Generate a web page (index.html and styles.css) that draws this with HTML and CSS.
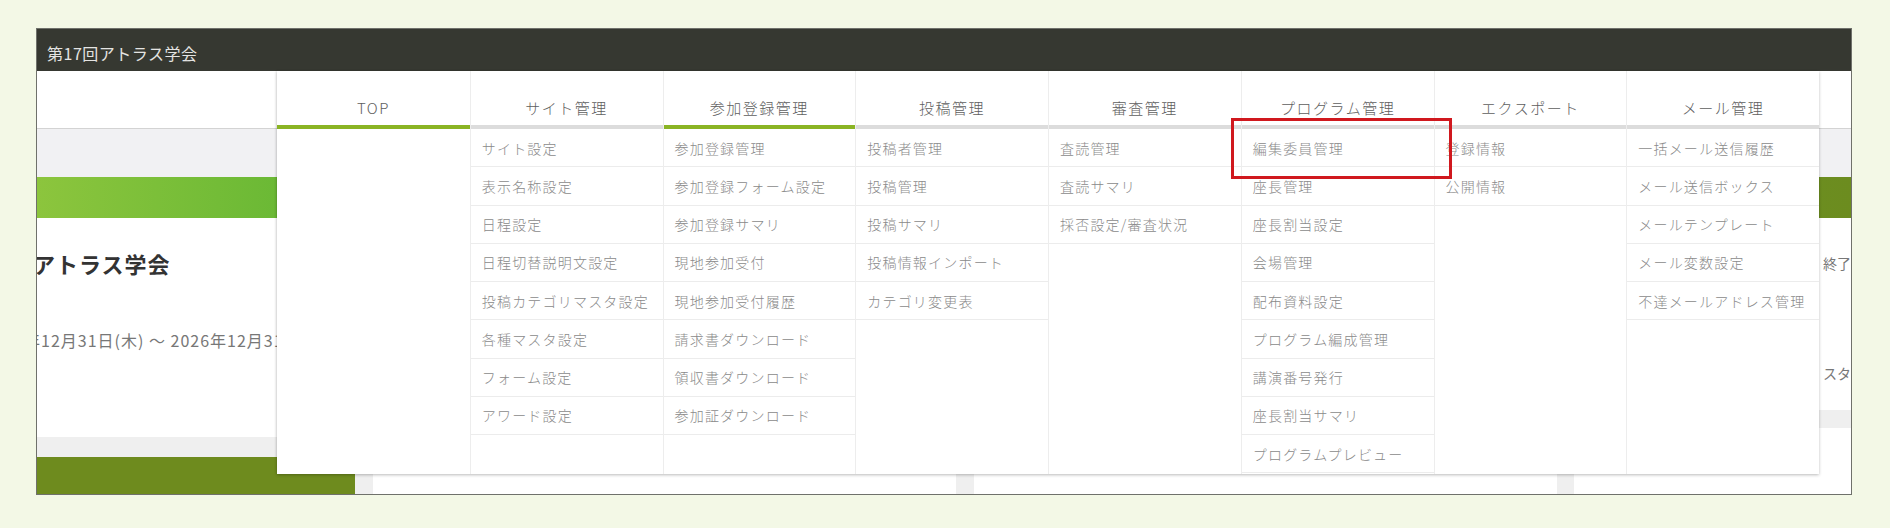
FILE: index.html
```html
<!DOCTYPE html>
<html lang="ja">
<head>
<meta charset="utf-8">
<title>第17回アトラス学会</title>
<link rel="stylesheet" href="styles.css">
</head>
<body>
<div class="page">
  <div class="frame">
    <div class="topbar">第17回アトラス学会</div>
    <div class="strip"></div>
    <div class="band"></div>
    <div class="greenbar"></div>
    <div class="body">
      <div class="main">
        <div class="info-card">
          <div class="conf-name">アトラス学会</div>
          <div class="conf-date">年12月31日(木) 〜 2026年12月31日(木)</div>
        </div>
        <div class="bottom-row">
          <div class="olive-btn"></div>
          <div class="card card-a"></div>
          <div class="card card-b"></div>
        </div>
      </div>
      <div class="side">
        <div class="side-card">
          <p class="side-line first">終了しました</p>
          <p class="side-line">スタッフ</p>
        </div>
        <div class="side-card2"></div>
      </div>
    </div>

    <nav class="megamenu">
      <div class="menu-col">
        <div class="menu-head active">TOP</div>
      </div>
      <div class="menu-col">
        <div class="menu-head">サイト管理</div>
        <div class="menu-item">サイト設定</div>
        <div class="menu-item">表示名称設定</div>
        <div class="menu-item">日程設定</div>
        <div class="menu-item">日程切替説明文設定</div>
        <div class="menu-item">投稿カテゴリマスタ設定</div>
        <div class="menu-item">各種マスタ設定</div>
        <div class="menu-item">フォーム設定</div>
        <div class="menu-item">アワード設定</div>
      </div>
      <div class="menu-col">
        <div class="menu-head active">参加登録管理</div>
        <div class="menu-item">参加登録管理</div>
        <div class="menu-item">参加登録フォーム設定</div>
        <div class="menu-item">参加登録サマリ</div>
        <div class="menu-item">現地参加受付</div>
        <div class="menu-item">現地参加受付履歴</div>
        <div class="menu-item">請求書ダウンロード</div>
        <div class="menu-item">領収書ダウンロード</div>
        <div class="menu-item">参加証ダウンロード</div>
      </div>
      <div class="menu-col">
        <div class="menu-head">投稿管理</div>
        <div class="menu-item">投稿者管理</div>
        <div class="menu-item">投稿管理</div>
        <div class="menu-item">投稿サマリ</div>
        <div class="menu-item">投稿情報インポート</div>
        <div class="menu-item">カテゴリ変更表</div>
      </div>
      <div class="menu-col">
        <div class="menu-head">審査管理</div>
        <div class="menu-item">査読管理</div>
        <div class="menu-item">査読サマリ</div>
        <div class="menu-item">採否設定/審査状況</div>
      </div>
      <div class="menu-col">
        <div class="menu-head">プログラム管理</div>
        <div class="menu-item">編集委員管理</div>
        <div class="menu-item">座長管理</div>
        <div class="menu-item">座長割当設定</div>
        <div class="menu-item">会場管理</div>
        <div class="menu-item">配布資料設定</div>
        <div class="menu-item">プログラム編成管理</div>
        <div class="menu-item">講演番号発行</div>
        <div class="menu-item">座長割当サマリ</div>
        <div class="menu-item">プログラムプレビュー</div>
      </div>
      <div class="menu-col">
        <div class="menu-head">エクスポート</div>
        <div class="menu-item">登録情報</div>
        <div class="menu-item">公開情報</div>
      </div>
      <div class="menu-col">
        <div class="menu-head">メール管理</div>
        <div class="menu-item">一括メール送信履歴</div>
        <div class="menu-item">メール送信ボックス</div>
        <div class="menu-item">メールテンプレート</div>
        <div class="menu-item">メール変数設定</div>
        <div class="menu-item">不達メールアドレス管理</div>
      </div>
      <div class="highlight"></div>
    </nav>
  </div>
</div>
</body>
</html>
```

FILE: styles.css
```css
* { box-sizing: border-box; }

html, body {
  margin: 0;
  padding: 0;
  background: #f3f8e6;
  font-family: "Noto Sans CJK JP", "Noto Sans", sans-serif;
}

.page {
  padding: 28px 0 0 36px;
  height: 528px;
}

.frame {
  position: relative;
  width: 1816px;
  height: 467px;
  border: 1px solid #6f716b;
  background: #efefef;
  overflow: hidden;
  display: flex;
  flex-direction: column;
}

.topbar {
  height: 42px;
  flex: none;
  background: #363831;
  color: #e4e4e2;
  font-size: 16px;
  letter-spacing: 0.5px;
  padding: 5px 0 0 10px;
  display: flex;
  align-items: center;
}

.strip {
  height: 58px;
  flex: none;
  background: #fff;
  border-bottom: 1px solid #d3d3d3;
}

.band {
  height: 48px;
  flex: none;
  background: #f1f1f3;
}

.greenbar {
  height: 41px;
  flex: none;
  background: linear-gradient(90deg, #8cc53d 0, #6bb935 240px, #6aa42b 1100px, #6c8c1f 100%);
}

.body {
  flex: 1;
  display: flex;
  gap: 17px;
  background: #efefef;
}

.main {
  flex: 1;
  display: flex;
  flex-direction: column;
  gap: 20px;
}

.info-card {
  height: 219px;
  background: #fff;
  padding-top: 30px;
}

.conf-name {
  margin-left: -4px;
  font-size: 22px;
  font-weight: bold;
  line-height: 30px;
  color: #333;
  letter-spacing: 1px;
}

.conf-date {
  margin: 52px 0 0 -13px;
  font-size: 16px;
  letter-spacing: 1px;
  line-height: 20px;
  color: #777;
  white-space: nowrap;
}

.bottom-row {
  flex: 1;
  display: flex;
  gap: 18px;
}

.olive-btn {
  width: 318px;
  background: #6e8b1e;
}

.card {
  background: #fff;
}

.card-a { width: 583px; }
.card-b { flex: 1; }

.side {
  width: 277px;
  display: flex;
  flex-direction: column;
  gap: 18px;
}

.side-card {
  height: 192px;
  background: #fff;
  padding-left: 249px;
}

.side-line {
  margin: 0;
  font-size: 14px;
  line-height: 20px;
  color: #777;
  white-space: nowrap;
}

.side-line.first { margin-top: 35px; }
.side-line + .side-line { margin-top: 90px; }

.side-card2 {
  flex: 1;
  background: #fff;
}

/* mega menu overlay */
.megamenu {
  position: absolute;
  left: 240px;
  top: 42px;
  width: 1542px;
  height: 403px;
  background: #fff;
  display: grid;
  grid-template-columns: repeat(8, 1fr);
  box-shadow: 0 1px 3px rgba(0, 0, 0, 0.25), -1px 0 2px rgba(0, 0, 0, 0.06);
}

.menu-col {
  display: flex;
  flex-direction: column;
  border-left: 1px solid #ededed;
  min-width: 0;
}

.menu-col:first-child { border-left: none; }

.menu-head {
  height: 58px;
  flex: none;
  padding-top: 27px;
  line-height: 20px;
  text-align: center;
  font-size: 15px;
  font-weight: 300;
  letter-spacing: 1.5px;
  color: #5e5e5e;
  border-bottom: 4px solid #dcdcdc;
}

.menu-head.active { border-bottom-color: #8ab424; }

.menu-item {
  height: 38.25px;
  flex: none;
  display: flex;
  align-items: center;
  padding-left: 11px;
  font-size: 14px;
  font-weight: 300;
  letter-spacing: 1.2px;
  color: #8a8a8a;
  white-space: nowrap;
  border-bottom: 1px solid #ececec;
}

.highlight {
  position: absolute;
  left: 954px;
  top: 47px;
  width: 221px;
  height: 61px;
  border: 3px solid #d0181e;
}
```
